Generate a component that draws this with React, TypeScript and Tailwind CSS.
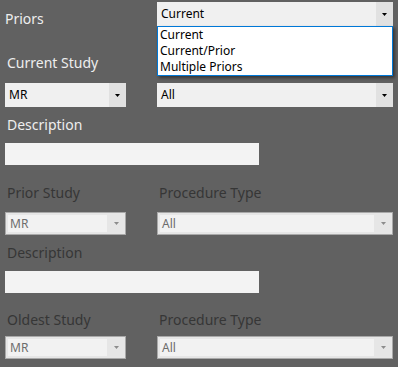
import React from 'react';

const FONT = { fontFamily: '"Noto Sans", "Open Sans", Arial, sans-serif' };

function Arrow({ disabled }: { disabled?: boolean }) {
  return (
    <svg width="5" height="3" viewBox="0 0 5 3" className="block">
      <polygon points="0,0 5,0 2.5,3" fill={disabled ? '#8c8c8c' : '#000000'} />
    </svg>
  );
}

function Select({ value, width, disabled }: { value: string; width: string; disabled?: boolean }) {
  if (disabled) {
    return (
      <div className={`${width} h-[23px] flex border border-[#a9a9a9] bg-[#e6e6e6]`}>
        <div className="flex-1 m-[2px] mr-0 bg-[#f2f2f2] flex items-center pl-[2px] text-[12px] text-[#6d6d6d]">
          {value}
        </div>
        <div className="w-[18px] flex items-center justify-center">
          <Arrow disabled />
        </div>
      </div>
    );
  }
  return (
    <div className={`${width} h-[24px] flex bg-[#f0f0f0]`}>
      <div className="flex-1 flex items-center pl-[4px] text-[12px] text-black">{value}</div>
      <div className="w-[17px] bg-[#e1e1e1] flex items-center justify-center">
        <Arrow />
      </div>
    </div>
  );
}

function Label({ children, dim, className = '' }: { children: React.ReactNode; dim?: boolean; className?: string }) {
  return (
    <div className={`text-[14px] leading-[20px] ${dim ? 'text-[#363636]' : 'text-[#eeeeee]'} ${className}`}>
      {children}
    </div>
  );
}

export default function App() {
  return (
    <div className="relative w-[398px] h-[367px] bg-[#616161] px-[5px] overflow-hidden" style={FONT}>
      {/* Priors */}
      <div className="flex items-start pt-[2px] h-[26px]">
        <Label className="w-[152px] mt-[7px]">Priors</Label>
        <Select value="Current" width="w-[236px]" />
      </div>

      {/* Current study */}
      <div className="flex mt-[27px]">
        <Label className="w-[152px] pl-[2px]">Current Study</Label>
      </div>
      <div className="flex gap-[31px] mt-[10px]">
        <Select value="MR" width="w-[121px]" />
        <Select value="All" width="w-[236px]" />
      </div>
      <Label className="mt-[8px] pl-[2px]">Description</Label>
      <div className="mt-[8px] w-[254px] h-[22px] bg-[#f3f3f3]" />

      {/* Prior study */}
      <div className="flex mt-[18px]">
        <Label dim className="w-[152px] pl-[2px]">Prior Study</Label>
        <Label dim className="pl-[2px]">Procedure Type</Label>
      </div>
      <div className="flex gap-[31px] mt-[9px]">
        <Select disabled value="MR" width="w-[121px]" />
        <Select disabled value="All" width="w-[236px]" />
      </div>
      <Label dim className="mt-[8px] pl-[2px]">Description</Label>
      <div className="mt-[8px] w-[254px] h-[22px] bg-[#f3f3f3]" />

      {/* Oldest study */}
      <div className="flex mt-[17px]">
        <Label dim className="w-[152px] pl-[2px]">Oldest Study</Label>
        <Label dim className="pl-[2px]">Procedure Type</Label>
      </div>
      <div className="flex gap-[31px] mt-[6px]">
        <Select disabled value="MR" width="w-[121px]" />
        <Select disabled value="All" width="w-[236px]" />
      </div>

      {/* Open dropdown list */}
      <div className="absolute left-[157px] top-[26px] w-[236px] h-[50px] bg-white border border-[#0078d7] shadow-[2px_2px_3px_rgba(0,0,0,0.45)] text-[12px] leading-[16px] text-black">
        <div className="pl-[2px]">Current</div>
        <div className="pl-[2px]">Current/Prior</div>
        <div className="pl-[2px]">Multiple Priors</div>
      </div>
    </div>
  );
}
